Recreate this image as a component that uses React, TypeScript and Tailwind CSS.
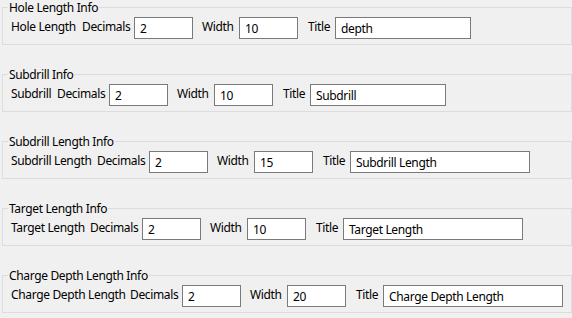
import React from "react";

type Group = {
  title: string;
  label: string;
  labelW: string;
  decimals: string;
  width: string;
  titleValue: string;
  titleW: string;
};

const groups: Group[] = [
  { title: "Hole Length Info", label: "Hole Length", labelW: "w-[71px]", decimals: "2", width: "10", titleValue: "depth", titleW: "w-[136px]" },
  { title: "Subdrill Info", label: "Subdrill", labelW: "w-[46px]", decimals: "2", width: "10", titleValue: "Subdrill", titleW: "w-[136px]" },
  { title: "Subdrill Length Info", label: "Subdrill Length", labelW: "w-[86px]", decimals: "2", width: "15", titleValue: "Subdrill Length", titleW: "w-[180px]" },
  { title: "Target Length Info", label: "Target Length", labelW: "w-[79px]", decimals: "2", width: "10", titleValue: "Target Length", titleW: "w-[180px]" },
  { title: "Charge Depth Length Info", label: "Charge Depth Length", labelW: "w-[119px]", decimals: "2", width: "20", titleValue: "Charge Depth Length", titleW: "w-[180px]" },
];

function Box({ value, w }: { value: string; w: string }) {
  return (
    <div className={`${w} h-[22px] shrink-0 border border-[#7a7a7a] bg-white pl-[5px] pt-[2px] flex items-center text-black leading-none`}>
      {value}
    </div>
  );
}

function Label({ text, w }: { text: string; w: string }) {
  return (
    <span className={`${w} shrink-0 whitespace-nowrap text-black leading-[16px] pb-[2px]`}>{text}</span>
  );
}

export default function App() {
  return (
    <div
      className="w-[572px] h-[318px] bg-[#f0f0f0] overflow-hidden text-[12px] tracking-[-0.35px]"
      style={{ fontFamily: '"Noto Sans", "Open Sans", sans-serif' }}
    >
      <div className="flex flex-col gap-[22px]">
        {groups.map((g) => (
          <fieldset key={g.title} className="ml-[2px] w-[570px] h-[45px] border border-[#dcdcdc] p-0 m-0 min-w-0">
            <legend className="ml-[5px] px-[1px] leading-[15px] text-black">{g.title}</legend>
            <div className="flex items-center pl-[8px] pt-[2px] h-[24px]">
              <Label text={g.label} w={g.labelW} />
              <Label text="Decimals" w="w-[52px]" />
              <Box value={g.decimals} w="w-[59px]" />
              <div className="w-[9px] shrink-0" />
              <Label text="Width" w="w-[37px]" />
              <Box value={g.width} w="w-[59px]" />
              <div className="w-[10px] shrink-0" />
              <Label text="Title" w="w-[27px]" />
              <Box value={g.titleValue} w={g.titleW} />
            </div>
          </fieldset>
        ))}
      </div>
    </div>
  );
}
